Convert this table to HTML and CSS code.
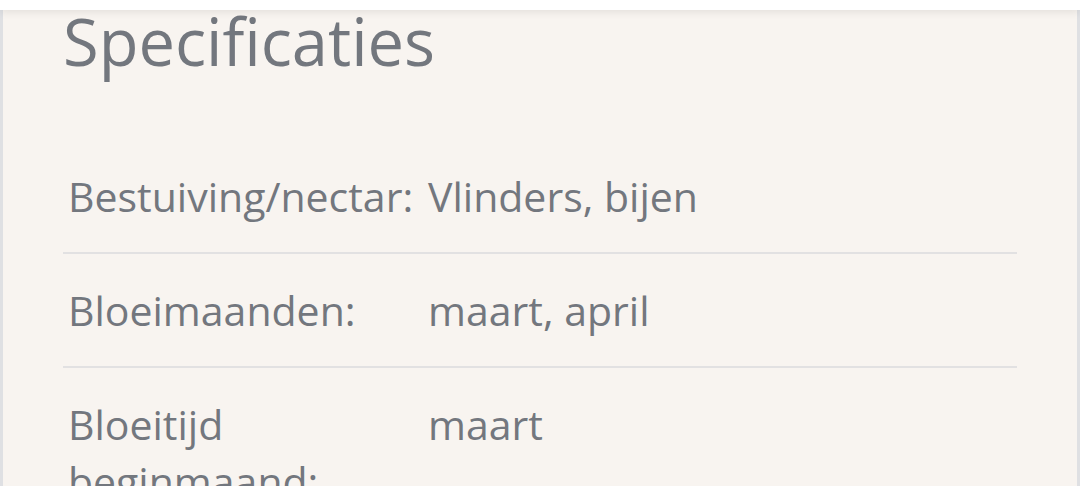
FILE: index.html
```html
<!DOCTYPE html>
<html lang="nl">
<head>
<meta charset="utf-8">
<link rel="stylesheet" href="styles.css">
</head>
<body>
<div class="topbar"></div>
<section class="card">
  <h2 class="card-title">Specificaties</h2>
  <div class="specs">
    <div class="spec-row">
      <div class="spec-label">Bestuiving/nectar:</div>
      <div class="spec-value">Vlinders, bijen</div>
    </div>
    <div class="spec-row">
      <div class="spec-label">Bloeimaanden:</div>
      <div class="spec-value">maart, april</div>
    </div>
    <div class="spec-row">
      <div class="spec-label">Bloeitijd beginmaand:</div>
      <div class="spec-value">maart</div>
    </div>
  </div>
</section>
</body>
</html>
```
FILE: styles.css
```css
html, body {
  margin: 0;
  padding: 0;
  background: #ffffff;
  overflow: hidden;
}
body {
  font-family: "Open Sans", "Noto Sans", sans-serif;
  color: #73777e;
  height: 486px;
}
.topbar {
  position: absolute;
  top: 0;
  left: 0;
  right: 0;
  height: 10px;
  background: #ffffff;
  box-shadow: 0 2px 8px rgba(0, 0, 0, 0.09);
  z-index: 2;
}
.card {
  background: #f8f4f0;
  border-left: 3px solid #dfe0e3;
  border-right: 3px solid #dfe0e3;
  padding: 0 60px;
  min-height: 486px;
  box-sizing: border-box;
}
.card-title {
  margin: 2px 0 59px;
  font-size: 65px;
  line-height: 79px;
  font-weight: 400;
  color: #73777e;
}
.spec-row {
  display: grid;
  grid-template-columns: 360px 1fr;
  border-bottom: 2px solid #e2e1e2;
}
.spec-label,
.spec-value {
  padding: 28px 5px 27px;
  font-size: 41px;
  line-height: 57px;
}
```
